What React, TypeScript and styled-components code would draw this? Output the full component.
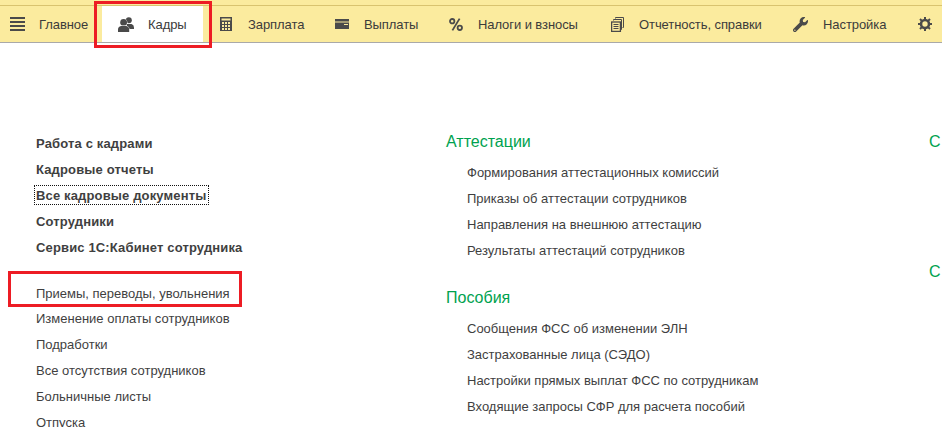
import React from 'react'
import styled, { createGlobalStyle } from 'styled-components'
import { FaWrench } from 'react-icons/fa'

const GlobalStyle = createGlobalStyle`
  html, body {
    margin: 0;
    padding: 0;
    background: #fff;
    overflow: hidden;
  }
  body {
    font-family: 'Liberation Sans', Arial, sans-serif;
    color: #333;
  }
`

const Page = styled.div`
  position: relative;
  width: 942px;
  height: 427px;
  overflow: hidden;
`

const TopBand = styled.header`
  padding-top: 5px;
  background: #fbeb9e;
  border-bottom: 1px solid #a9a9a9;
`

const Toolbar = styled.nav`
  display: flex;
  align-items: stretch;
  height: 36px;
  border-top: 1px solid #d9c36f;
`

const Tab = styled.div<{ $active?: boolean; $width: number; $gap: number; $pad: number }>`
  display: flex;
  align-items: center;
  flex: none;
  width: ${(p) => p.$width}px;
  padding-left: ${(p) => p.$pad}px;
  gap: ${(p) => p.$gap}px;
  box-sizing: border-box;
  font-size: 13px;
  letter-spacing: -0.08px;
  color: #3b3b3b;
  background: ${(p) => (p.$active ? '#fff' : 'transparent')};
  white-space: nowrap;
`

const IconSlot = styled.span<{ $size: number }>`
  display: flex;
  align-items: center;
  justify-content: center;
  flex: none;
  width: ${(p) => p.$size}px;
  color: #4a4a4a;
`

const Content = styled.main`
  display: grid;
  grid-template-columns: 410px 483px 1fr;
  padding: 86px 0 0 36px;
`

const Column = styled.div<{ $top?: number }>`
  display: flex;
  flex-direction: column;
  padding-top: ${(p) => p.$top ?? 0}px;
`

const MainLink = styled.div`
  height: 26px;
  line-height: 26px;
  font-size: 13px;
  font-weight: 700;
  letter-spacing: 0.15px;
  color: #3f3f3f;
  white-space: nowrap;
`

const FocusText = styled.span`
  outline: 1px dotted #111;
  padding: 2px 1px 1px;
  margin-left: -1px;
`

const PlainLink = styled.div`
  height: 26px;
  line-height: 26px;
  font-size: 13px;
  color: #3f3f3f;
  white-space: nowrap;
`

const LinkList = styled.div`
  display: flex;
  flex-direction: column;
  margin-top: 20px;

  ${PlainLink}:first-child {
    height: 25px;
  }
`

const Section = styled.section<{ $gap?: number }>`
  display: flex;
  flex-direction: column;
  margin-bottom: ${(p) => p.$gap ?? 0}px;
`

const SectionTitle = styled.h2<{ $gap?: number }>`
  margin: 0 0 ${(p) => p.$gap ?? 5}px;
  height: 26px;
  line-height: 26px;
  font-size: 16px;
  font-weight: 400;
  color: #00a24f;
  white-space: nowrap;
`

const SectionLink = styled(PlainLink)`
  padding-left: 21px;
`

const Marker = styled.div<{ $left: number; $top: number; $width: number; $height: number }>`
  position: absolute;
  left: ${(p) => p.$left}px;
  top: ${(p) => p.$top}px;
  width: ${(p) => p.$width}px;
  height: ${(p) => p.$height}px;
  box-sizing: border-box;
  border: 3px solid #ed1c24;
  pointer-events: none;
`

const MenuIcon = () => (
  <svg width="15" height="14" viewBox="0 0 15 14" fill="#4a4a4a">
    <rect y="0" width="15" height="2" />
    <rect y="4" width="15" height="2" />
    <rect y="8" width="15" height="2" />
    <rect y="12" width="15" height="2" />
  </svg>
)

const PeopleIcon = () => (
  <svg width="16" height="15" viewBox="0 0 16 15" fill="#4a4a4a">
    <circle cx="10.8" cy="3.2" r="3" />
    <path d="M8 7h5.5q2.5.8 2.5 3.6V12h-5z" />
    <g stroke="#fff" strokeWidth="0.9" style={{ paintOrder: 'stroke' }}>
      <circle cx="5.6" cy="5.4" r="3.4" />
      <path d="M0 15v-2.6q0-2.8 3-3.4h5.2q3 .6 3 3.4V15z" />
    </g>
  </svg>
)

const CalcIcon = () => (
  <svg width="12" height="14" viewBox="0 0 12 14">
    <rect width="12" height="14" fill="#4a4a4a" />
    <rect x="1.5" y="1.5" width="9" height="2" fill="#fbeb9e" />
    <g fill="#fbeb9e">
      {[2, 5, 8].map((x) =>
        [5, 8, 11].map((y) => <rect key={`${x}-${y}`} x={x} y={y} width="2" height="2" />),
      )}
    </g>
  </svg>
)

const CardIcon = () => (
  <svg width="14" height="10" viewBox="0 0 14 10" fill="#4a4a4a">
    <rect y="0" width="14" height="2.5" />
    <rect y="3.5" width="14" height="6.5" />
    <rect x="9" y="5" width="4" height="1" fill="#fbeb9e" />
  </svg>
)

const PercentIcon = () => (
  <svg width="14" height="13" viewBox="0 0 14 13" fill="none" stroke="#4a4a4a" strokeWidth="1.8">
    <circle cx="3.2" cy="3.2" r="2.2" />
    <circle cx="10.8" cy="9.8" r="2.2" />
    <path d="M10.6.6 3.4 12.4" />
  </svg>
)

const DocsIcon = () => (
  <svg width="13" height="15" viewBox="0 0 13 15" fill="none" stroke="#4a4a4a">
    <path d="M4.5 1.5V.5h8v10h-1" />
    <path d="M2.5 3.5V2.5h8v10h-1" />
    <rect x="0.6" y="5" width="8.8" height="9.4" fill="#fbeb9e" strokeWidth="1.3" />
    <path d="M2.5 7.5h5M2.5 9.5h5M2.5 11.5h5" />
  </svg>
)

const GearIcon = () => (
  <svg width="14" height="14" viewBox="0 0 14 14" fill="none" stroke="#4a4a4a">
    <circle cx="7" cy="7" r="4" strokeWidth="2.6" />
    <path
      d="M7 0v3M7 11v3M0 7h3M11 7h3M2 2l2.1 2.1M9.9 9.9 12 12M12 2 9.9 4.1M4.1 9.9 2 12"
      strokeWidth="2"
    />
  </svg>
)

const tabs = [
  { label: 'Главное', icon: <MenuIcon />, width: 102, pad: 10, gap: 14, size: 15 },
  { label: 'Кадры', icon: <PeopleIcon />, width: 101, pad: 16, gap: 14, size: 16, active: true },
  { label: 'Зарплата', icon: <CalcIcon />, width: 132, pad: 17, gap: 16, size: 12 },
  { label: 'Выплаты', icon: <CardIcon />, width: 114, pad: 0, gap: 15, size: 14 },
  { label: 'Налоги и взносы', icon: <PercentIcon />, width: 162, pad: 0, gap: 15, size: 14 },
  { label: 'Отчетность, справки', icon: <DocsIcon />, width: 182, pad: 0, gap: 15, size: 13 },
  { label: 'Настройка', icon: <FaWrench size={15} />, width: 124, pad: 0, gap: 15, size: 15 },
  { label: '', icon: <GearIcon />, width: 25, pad: 1, gap: 0, size: 14 },
]

const mainLinks = ['Работа с кадрами', 'Кадровые отчеты', 'Все кадровые документы', 'Сотрудники', 'Сервис 1С:Кабинет сотрудника']
const staffLinks = ['Приемы, переводы, увольнения', 'Изменение оплаты сотрудников', 'Подработки', 'Все отсутствия сотрудников', 'Больничные листы', 'Отпуска']
const attestation = ['Формирования аттестационных комиссий', 'Приказы об аттестации сотрудников', 'Направления на внешнюю аттестацию', 'Результаты аттестаций сотрудников']
const benefits = ['Сообщения ФСС об изменении ЭЛН', 'Застрахованные лица (СЭДО)', 'Настройки прямых выплат ФСС по сотрудникам', 'Входящие запросы СФР для расчета пособий']

const App = () => (
  <Page>
    <GlobalStyle />
    <TopBand>
      <Toolbar>
        {tabs.map((tab, i) => (
          <Tab key={i} $active={tab.active} $width={tab.width} $gap={tab.gap} $pad={tab.pad}>
            <IconSlot $size={tab.size}>{tab.icon}</IconSlot>
            {tab.label}
          </Tab>
        ))}
      </Toolbar>
    </TopBand>
    <Content>
      <Column $top={2}>
        {mainLinks.map((text) => (
          <MainLink key={text}>
            {text === 'Все кадровые документы' ? <FocusText>{text}</FocusText> : text}
          </MainLink>
        ))}
        <LinkList>
          {staffLinks.map((text) => (
            <PlainLink key={text}>{text}</PlainLink>
          ))}
        </LinkList>
      </Column>
      <Column>
        <Section $gap={21}>
          <SectionTitle>Аттестации</SectionTitle>
          {attestation.map((text) => (
            <SectionLink key={text}>{text}</SectionLink>
          ))}
        </Section>
        <Section>
          <SectionTitle>Пособия</SectionTitle>
          {benefits.map((text) => (
            <SectionLink key={text}>{text}</SectionLink>
          ))}
        </Section>
      </Column>
      <Column>
        <SectionTitle $gap={104}>С</SectionTitle>
        <SectionTitle>С</SectionTitle>
      </Column>
    </Content>
    <Marker $left={94} $top={1} $width={118} $height={47} />
    <Marker $left={8} $top={271} $width={234} $height={36} />
  </Page>
)

export default App
